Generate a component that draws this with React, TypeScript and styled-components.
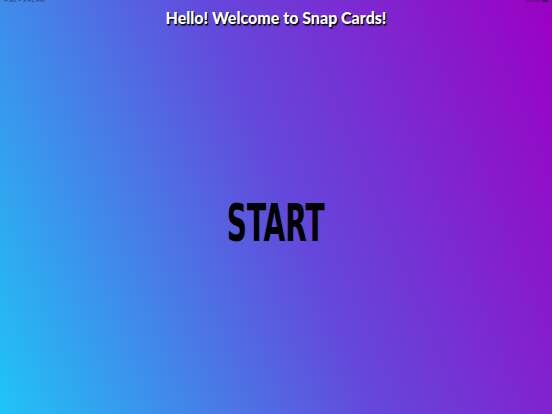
import React from 'react';
import styled, { createGlobalStyle } from 'styled-components';

const GlobalStyle = createGlobalStyle`
  html, body {
    margin: 0;
    padding: 0;
    height: 100%;
  }
  #root {
    height: 100%;
  }
`;

const Screen = styled.div`
  width: 552px;
  height: 414px;
  display: flex;
  flex-direction: column;
  overflow: hidden;
  background: linear-gradient(68deg, #20c4f7 0%, #6448db 52%, #9c00c3 100%);
`;

const StatusBar = styled.div`
  height: 4px;
  display: flex;
  justify-content: space-between;
  padding: 0 4px;
  overflow: hidden;
  font-family: 'Liberation Sans', sans-serif;
  font-size: 6px;
  line-height: 4px;
  color: rgba(20, 20, 60, 0.7);
`;

const StatusText = styled.span`
  display: block;
  margin-top: -2px;
`;

const Title = styled.h1`
  margin: 4px 0 0;
  text-align: center;
  font-family: 'Lato', 'Noto Sans', sans-serif;
  font-weight: 900;
  font-size: 16px;
  line-height: 20px;
  color: #ffffff;
  text-shadow: 1px 1px 0 #000, 1px 2px 1px rgba(0, 0, 0, 0.6);
`;

const Stage = styled.div`
  flex: 1;
  display: flex;
  align-items: center;
  justify-content: center;
`;

const StartButton = styled.button`
  border: none;
  background: none;
  padding: 0;
  cursor: pointer;
  font-family: 'DejaVu Sans Condensed', 'DejaVu Sans', sans-serif;
  font-stretch: condensed;
  font-weight: 700;
  font-size: 52px;
  line-height: 1;
  color: #000;
  transform: scaleX(0.6);
  margin-top: 4px;
`;

export default function App() {
  return (
    <>
      <GlobalStyle />
      <Screen>
        <StatusBar>
          <StatusText>iPad ≈ 9:41 AM</StatusText>
          <StatusText>100% ▬</StatusText>
        </StatusBar>
        <Title>Hello! Welcome to Snap Cards!</Title>
        <Stage>
          <StartButton>START</StartButton>
        </Stage>
      </Screen>
    </>
  );
}
